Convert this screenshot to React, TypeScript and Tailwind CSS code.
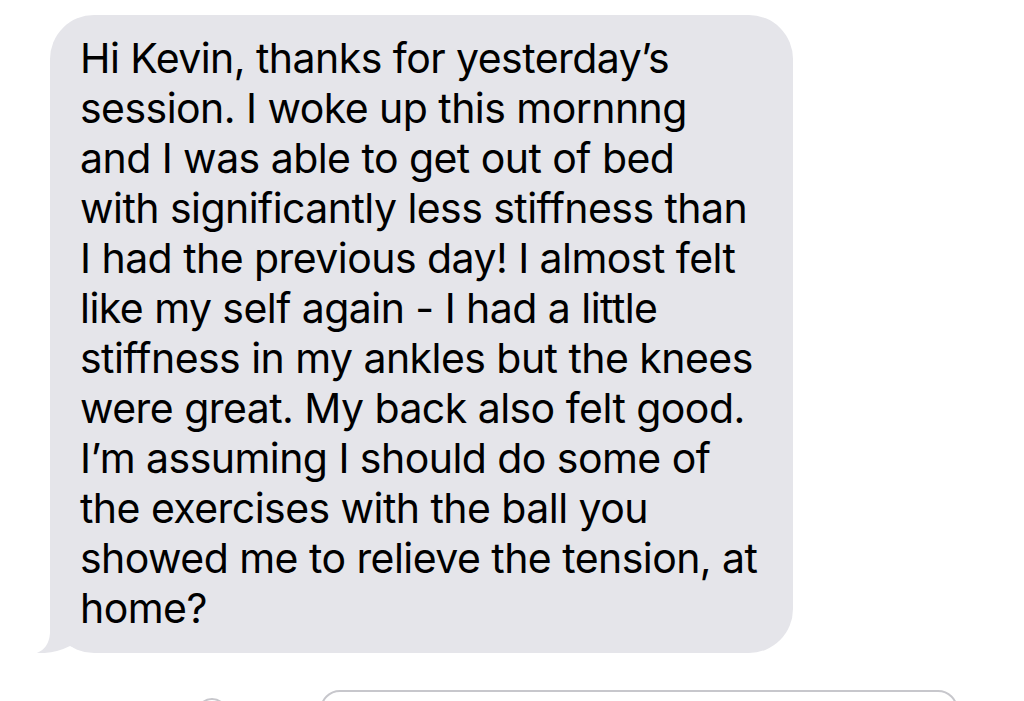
import React from "react";

const lines = [
  "Hi Kevin, thanks for yesterday\u2019s",
  "session. I woke up this mornnng",
  "and I was able to get out of bed",
  "with significantly less stiffness than",
  "I had the previous day! I almost felt",
  "like my self again - I had a little",
  "stiffness in my ankles but the knees",
  "were great. My back also felt good.",
  "I\u2019m assuming I should do some of",
  "the exercises with the ball you",
  "showed me to relieve the tension, at",
  "home?",
];

export default function App() {
  return (
    <div
      className="w-[1024px] h-[701px] overflow-hidden bg-white flex flex-col"
      style={{ fontFamily: "Inter, 'Noto Sans', sans-serif" }}
    >
      <div className="pt-[15px] pl-[50px]">
        <div className="relative w-[743px] bg-[#e5e5ea] rounded-[44px] pl-[30px] pt-[18px] pb-[20px] text-black text-[41px] leading-[50px] tracking-[-0.55px]">
          {lines.map((l, i) => (
            <div key={i} className="relative z-10 whitespace-nowrap">
              {l}
            </div>
          ))}
          <svg
            className="absolute left-[-14px] bottom-0"
            width="40"
            height="45"
            viewBox="0 0 40 45"
          >
            <path
              d="M14 0 L14 25 Q13 40 1 45 Q18 46 34 38 L40 40 L40 0 Z"
              fill="#e5e5ea"
            />
          </svg>
        </div>
      </div>
      <div className="mt-[37px] flex items-start">
        <div className="ml-[196px] mt-[8px] w-[32px] h-[32px] rounded-full border-2 border-[#c7c7cc]" />
        <div className="ml-[92px] w-[638px] h-[40px] rounded-[20px] border-2 border-[#c7c7cc]" />
      </div>
    </div>
  );
}
